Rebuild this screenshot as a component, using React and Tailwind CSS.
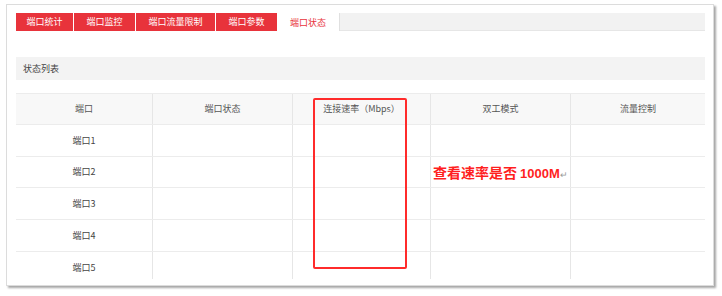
const font = { fontFamily: '"Noto Sans CJK SC", "Noto Sans", sans-serif' };

const tabs = [
  { label: "端口统计", w: "w-[57px]" },
  { label: "端口监控", w: "w-[61px]" },
  { label: "端口流量限制", w: "w-[79px]" },
  { label: "端口参数", w: "w-[61px]" },
];

const cols = [
  { label: "端口", w: "w-[136px]" },
  { label: "端口状态", w: "w-[140px]" },
  { label: "连接速率（Mbps）", w: "w-[138px]" },
  { label: "双工模式", w: "w-[140px]" },
  { label: "流量控制", w: "w-[135px]" },
];

// row heights follow the screenshot (last one is cut short)
const rows = [
  { label: "端口1", h: "h-[32px]", pad: "" },
  { label: "端口2", h: "h-[31px]", pad: "" },
  { label: "端口3", h: "h-[32px]", pad: "" },
  { label: "端口4", h: "h-[32px]", pad: "" },
  { label: "端口5", h: "h-[27px]", pad: "pt-[4px]" },
];

export default function App() {
  return (
    <div
      className="relative w-[722px] h-[296px] bg-white pl-[6px] pt-[4px] text-[#555]"
      style={font}
    >
      <div className="w-[708px] h-[282px] bg-white border border-[#dcdcdc] shadow-[2px_2px_2px_rgba(0,0,0,0.35)] pl-[9px] pr-[8px] pt-[8px] overflow-hidden">
        {/* tabs */}
        <div className="flex h-[18px] gap-px">
          {tabs.map((t) => (
            <div
              key={t.label}
              className={`${t.w} bg-[#e8333b] text-white text-[9px] leading-[18px] text-center`}
            >
              {t.label}
            </div>
          ))}
          <div className="w-[63px] -ml-px bg-white border-r border-[#e0e0e0] text-[#e8333b] text-[9px] leading-[20px] text-center">
            端口状态
          </div>
          <div className="flex-1 -ml-px bg-[#f2f2f2] border-b border-[#e6e6e6]" />
        </div>

        {/* section header */}
        <div className="mt-[26px] h-[23px] bg-[#f3f3f3] pl-[7px] text-[9px] leading-[23px] text-[#444]">
          状态列表
        </div>

        {/* table */}
        <div className="mt-[13px]">
          <div className="flex h-[32px] bg-[#f8f8f8] border-t border-b border-[#ececec]">
            {cols.map((c, i) => (
              <div
                key={c.label}
                className={`${c.w} ${i > 0 ? "border-l border-[#e6e6e6]" : ""} flex items-center justify-center text-[9px] text-[#555]`}
              >
                {c.label}
              </div>
            ))}
          </div>
          {rows.map((r, ri) => (
            <div
              key={r.label}
              className={`flex ${r.h} ${ri < rows.length - 1 ? "border-b border-[#ececec]" : ""}`}
            >
              {cols.map((c, i) => (
                <div
                  key={c.label}
                  className={`${c.w} ${r.pad} ${i > 0 ? "border-l border-[#e6e6e6]" : ""} flex items-center justify-center text-[9px] text-[#444]`}
                >
                  {i === 0 ? r.label : ""}
                </div>
              ))}
            </div>
          ))}
        </div>
      </div>

      {/* annotation */}
      <div className="absolute left-[313px] top-[98px] w-[94px] h-[171px] border-2 border-[#ff2b2b] rounded-[2px]" />
      <div className="absolute left-[433px] top-[162px] flex items-baseline whitespace-nowrap text-[#ff1f1f] font-bold">
        <span className="text-[14px]">查看速率是否</span>
        <span
          className="ml-[3px] text-[13px]"
          style={{ fontFamily: '"Liberation Sans", Arial, sans-serif' }}
        >
          1000M
        </span>
        <span className="text-[9px] font-normal text-[#999]">↵</span>
      </div>
    </div>
  );
}
